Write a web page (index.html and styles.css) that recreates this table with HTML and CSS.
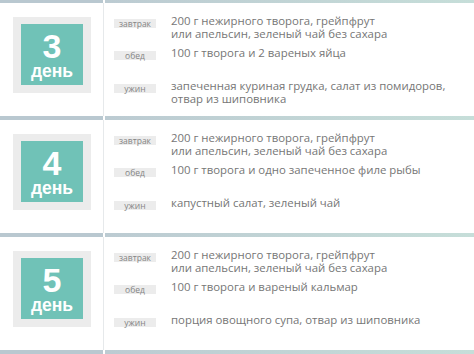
FILE: index.html
```html
<!DOCTYPE html>
<html lang="ru">
<head>
<meta charset="utf-8">
<link rel="stylesheet" href="styles.css">
</head>
<body>
<div class="plan">
  <div class="bar bar-top"><span class="bar-left"></span><span class="bar-right"></span></div>
  <section class="day">
    <div class="day-side">
      <div class="badge"><div class="badge-inner"><span class="num">3</span><span class="word">день</span></div></div>
    </div>
    <div class="meals">
      <div class="meal"><span class="tag">завтрак</span><p class="food">200 г нежирного творога, грейпфрут<br>или апельсин, зеленый чай без сахара</p></div>
      <div class="meal"><span class="tag">обед</span><p class="food">100 г творога и 2 вареных яйца</p></div>
      <div class="meal"><span class="tag">ужин</span><p class="food">запеченная куриная грудка, салат из помидоров,<br>отвар из шиповника</p></div>
    </div>
  </section>
  <div class="bar"><span class="bar-left"></span><span class="bar-right"></span></div>
  <section class="day">
    <div class="day-side">
      <div class="badge"><div class="badge-inner"><span class="num">4</span><span class="word">день</span></div></div>
    </div>
    <div class="meals">
      <div class="meal"><span class="tag">завтрак</span><p class="food">200 г нежирного творога, грейпфрут<br>или апельсин, зеленый чай без сахара</p></div>
      <div class="meal"><span class="tag">обед</span><p class="food">100 г творога и одно запеченное филе рыбы</p></div>
      <div class="meal"><span class="tag">ужин</span><p class="food">капустный салат, зеленый чай</p></div>
    </div>
  </section>
  <div class="bar"><span class="bar-left"></span><span class="bar-right"></span></div>
  <section class="day">
    <div class="day-side">
      <div class="badge"><div class="badge-inner"><span class="num">5</span><span class="word">день</span></div></div>
    </div>
    <div class="meals">
      <div class="meal"><span class="tag">завтрак</span><p class="food">200 г нежирного творога, грейпфрут<br>или апельсин, зеленый чай без сахара</p></div>
      <div class="meal"><span class="tag">обед</span><p class="food">100 г творога и вареный кальмар</p></div>
      <div class="meal"><span class="tag">ужин</span><p class="food">порция овощного супа, отвар из шиповника</p></div>
    </div>
  </section>
  <div class="bar"><span class="bar-left"></span><span class="bar-right"></span></div>
</div>
</body>
</html>
```

FILE: styles.css
```css
html, body {
  margin: 0;
  padding: 0;
  background: #ffffff;
}

.plan {
  width: 474px;
  display: flex;
  flex-direction: column;
  font-family: "Open Sans", "Liberation Sans", sans-serif;
}

.bar {
  display: flex;
  height: 4px;
  gap: 2px;
}

.bar-top {
  height: 3px;
}

.bar-left {
  width: 103px;
  background: #b9c8d0;
}

.bar-right {
  flex: 1;
  background: linear-gradient(to right, #bccbd2, #c2d6d6 60%, #c6ded9);
}

.day {
  display: flex;
  height: 113px;
}

.day-side {
  width: 104px;
  border-right: 1px solid #e6e9eb;
  padding: 14px 0 0 13px;
  box-sizing: border-box;
}

.badge {
  width: 78px;
  box-sizing: border-box;
  padding: 7px 8px 8px;
  background: #ececec;
}

.badge-inner {
  height: 61px;
  box-sizing: border-box;
  padding-top: 5px;
  background: #70c2b7;
  color: #ffffff;
  display: flex;
  flex-direction: column;
  align-items: center;
  font-family: "Liberation Sans", Arial, sans-serif;
  font-weight: bold;
}

.num {
  font-size: 34px;
  line-height: 34px;
}

.word {
  font-size: 17.5px;
  line-height: 17px;
}

.meals {
  flex: 1;
  padding: 12px 0 0 10px;
  display: grid;
  grid-template-rows: 32px 33px auto;
  align-content: start;
}

.meal {
  display: flex;
  align-items: flex-start;
  gap: 15px;
}

.tag {
  flex: none;
  width: 42px;
  height: 9px;
  margin-top: 4px;
  background: #ececec;
  color: #858585;
  font-size: 8.5px;
  line-height: 9px;
  text-align: center;
}

.food {
  margin: 0;
  color: #767676;
  font-size: 11.4px;
  line-height: 12.5px;
  white-space: nowrap;
}
```
